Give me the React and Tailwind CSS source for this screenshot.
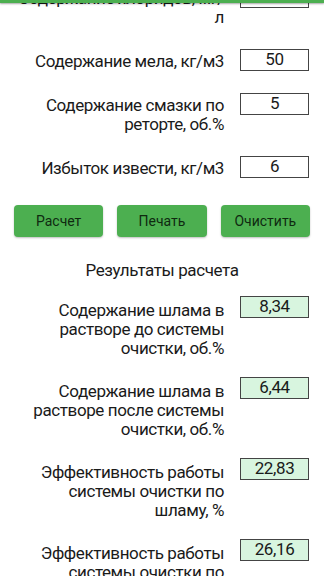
import React from 'react';

const FONT = { fontFamily: 'Roboto, "Noto Sans", sans-serif' };

function Row({ label, value, result, pt = 'pt-[3px]' }) {
  return (
    <div className="flex items-start">
      <div className={`w-[224px] pl-[18px] text-right text-[17px] tracking-[-0.4px] leading-[19px] text-[#1a1a1a] ${pt}`}>
        {label}
      </div>
      <div
        className={`ml-[16px] w-[69px] h-[22px] flex items-center justify-center border border-[#444] text-[17px] tracking-[-0.4px] text-[#1a1a1a] ${
          result ? 'bg-[#d8f5df]' : 'bg-white'
        }`}
      >
        {value}
      </div>
    </div>
  );
}

export default function App() {
  return (
    <div className="relative w-[324px] h-[576px] overflow-hidden bg-white" style={FONT}>
      {/* полоса тулбара сверху */}
      <div className="absolute top-0 left-0 right-0 h-[3px] bg-[#4caf50] shadow-[0_1px_2px_rgba(0,0,0,0.35)] z-10" />

      <div className="mt-[-14px] flex flex-col gap-[22px]">
        <Row label={<><span className="whitespace-nowrap">Содержание хлоридов, мг/</span><br />л</>} value="97000" />
        <Row label="Содержание мела, кг/м3" value="50" />
        <Row label="Содержание смазки по реторте, об.%" value="5" />
        <Row label="Избыток извести, кг/м3" value="6" />
      </div>

      <div className="mt-[27px] px-[14px] flex gap-[14px]">
        {['Расчет', 'Печать', 'Очистить'].map((t) => (
          <button
            key={t}
            type="button"
            className="flex-1 h-[32px] rounded-[4px] bg-[#4caf50] text-[14px] text-[#0f2a10] shadow-[0_1px_2px_rgba(0,0,0,0.25)]"
          >
            {t}
          </button>
        ))}
      </div>

      <div className="mt-[24px] text-center text-[17px] tracking-[-0.4px] leading-[19px] text-[#1a1a1a]">Результаты расчета</div>

      <div className="mt-[16px] flex flex-col gap-[19px]">
        <Row result pt="pt-[5px]" label="Содержание шлама в растворе до системы очистки, об.%" value="8,34" />
        <Row result pt="pt-[5px]" label="Содержание шлама в растворе после системы очистки, об.%" value="6,44" />
        <Row result pt="pt-[5px]" label="Эффективность работы системы очистки по шламу, %" value="22,83" />
        <Row result pt="pt-[5px]" label="Эффективность работы системы очистки по смазке, %" value="26,16" />
      </div>
    </div>
  );
}
